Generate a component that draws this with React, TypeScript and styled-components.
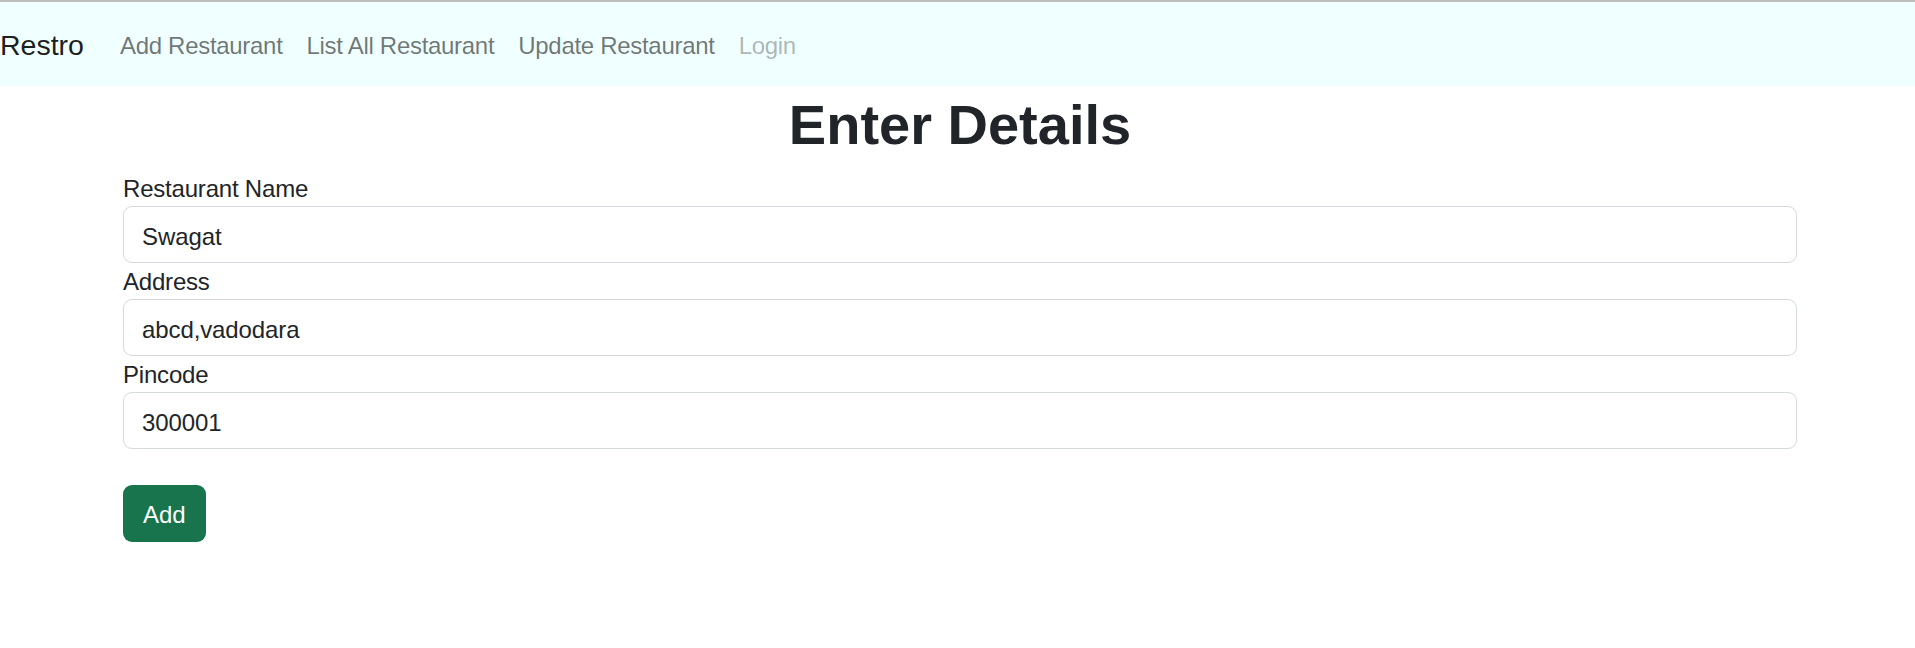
import React from "react";
import styled, { createGlobalStyle } from "styled-components";

const GlobalStyle = createGlobalStyle`
  html, body { margin: 0; padding: 0; background: #ffffff; }
  body {
    font-family: "Liberation Sans", Arial, sans-serif;
    color: #212529;
    border-top: 2px solid #bdbdbd;
  }
  * { box-sizing: border-box; }
`;

const NavBar = styled.nav`
  display: flex;
  align-items: center;
  height: 84px;
  background: #f0ffff;
  padding: 3px 0 0;
`;

const Brand = styled.span`
  font-size: 28.5px;
  line-height: 45px;
  color: rgba(0, 0, 0, 0.9);
  margin-right: 24px;
`;

const NavList = styled.div`
  display: flex;
  align-items: center;
`;

const NavLink = styled.span<{ $disabled?: boolean }>`
  font-size: 24px;
  line-height: 36px;
  letter-spacing: -0.3px;
  padding: 12px 12px;
  color: ${(p) => (p.$disabled ? "rgba(0,0,0,0.3)" : "rgba(0,0,0,0.55)")};
`;

const Container = styled.main`
  width: 1674px;
  margin-left: 123px;
  display: flex;
  flex-direction: column;
`;

const Title = styled.h1`
  margin: 0 0 12px;
  padding-top: 5px;
  text-align: center;
  font-size: 56px;
  font-weight: 700;
  line-height: 67px;
  color: #212529;
`;

const Label = styled.label`
  display: block;
  font-size: 24px;
  line-height: 34px;
  padding-top: 2px;
  letter-spacing: -0.2px;
  color: #212529;
`;

const Input = styled.input`
  display: block;
  width: 100%;
  height: 57px;
  padding: 11px 18px 7px;
  font-family: inherit;
  font-size: 24px;
  letter-spacing: -0.1px;
  color: #212529;
  background: #fff;
  border: 1.5px solid #d6d9dd;
  border-radius: 9px;
  outline: none;
`;

const Spacer = styled.div`
  height: 36px;
`;

const Button = styled.button`
  align-self: flex-start;
  height: 57px;
  padding: 3px 20px 0;
  font-family: inherit;
  font-size: 24px;
  color: #fff;
  background: #18744c;
  border: none;
  border-radius: 9px;
`;

export default function App() {
  return (
    <>
      <GlobalStyle />
      <NavBar>
        <Brand>Restro</Brand>
        <NavList>
          <NavLink>Add Restaurant</NavLink>
          <NavLink>List All Restaurant</NavLink>
          <NavLink>Update Restaurant</NavLink>
          <NavLink $disabled>Login</NavLink>
        </NavList>
      </NavBar>
      <Container>
        <Title>Enter Details</Title>
        <Label>Restaurant Name</Label>
        <Input defaultValue="Swagat" />
        <Label>Address</Label>
        <Input defaultValue="abcd,vadodara" />
        <Label>Pincode</Label>
        <Input defaultValue="300001" />
        <Spacer />
        <Button>Add</Button>
      </Container>
    </>
  );
}
